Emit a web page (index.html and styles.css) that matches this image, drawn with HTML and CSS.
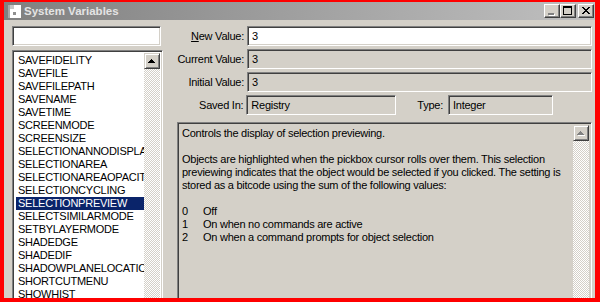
FILE: index.html
```html
<!DOCTYPE html>
<html lang="en">
<head>
  <meta charset="UTF-8" />
  <title>System Variables</title>
  <link rel="stylesheet" href="styles.css">
</head>
<body>
  <div class="frame">
    <div class="titlebar">
      <svg class="app-icon" width="13" height="13" viewBox="0 0 13 13" shape-rendering="crispEdges">
        <rect x="0" y="0" width="13" height="13" fill="#fff"/>
        <rect x="0" y="0" width="2" height="13" fill="#a8a8a8"/>
        <rect x="2" y="0" width="4" height="4" fill="#c8c8c8"/>
        <rect x="5" y="7" width="3" height="3" fill="#909090"/>
      </svg>
      <span class="title">System Variables</span>
      <div class="caption-buttons">
        <span class="cap-btn">
          <svg width="14" height="12" viewBox="0 0 14 12" shape-rendering="crispEdges">
            <rect x="4" y="9" width="6" height="2" fill="#fff"/>
            <rect x="3" y="8" width="6" height="2" fill="#808080"/>
          </svg>
        </span>
        <span class="cap-btn">
          <svg width="14" height="12" viewBox="0 0 14 12" shape-rendering="crispEdges">
            <path d="M2 1h9v9H2z M3 3v6h7V3z" fill="#000" fill-rule="evenodd"/>
          </svg>
        </span>
        <span class="cap-btn close">
          <svg width="14" height="12" viewBox="0 0 14 12" shape-rendering="crispEdges">
            <path d="M3 2h2v1h1v1h2V3h1V2h2v1h-1v1H9v1H8v1h1v1h1v1h1v1H9V8H8V7H6v1H5v1H3V8h1V7h1V6h1V5H5V4H4V3H3z" fill="#000"/>
          </svg>
        </span>
      </div>
    </div>

    <div class="window">
      <div class="left">
        <div class="field search"></div>
        <div class="field listbox">
          <ul class="items">
            <li>SAVEFIDELITY</li>
            <li>SAVEFILE</li>
            <li>SAVEFILEPATH</li>
            <li>SAVENAME</li>
            <li>SAVETIME</li>
            <li>SCREENMODE</li>
            <li>SCREENSIZE</li>
            <li>SELECTIONANNODISPLA</li>
            <li>SELECTIONAREA</li>
            <li>SELECTIONAREAOPACIT</li>
            <li>SELECTIONCYCLING</li>
            <li class="selected">SELECTIONPREVIEW</li>
            <li>SELECTSIMILARMODE</li>
            <li>SETBYLAYERMODE</li>
            <li>SHADEDGE</li>
            <li>SHADEDIF</li>
            <li>SHADOWPLANELOCATIC</li>
            <li>SHORTCUTMENU</li>
            <li>SHOWHIST</li>
          </ul>
          <div class="scrollbar">
            <span class="arrow-btn">
              <svg width="12" height="12" viewBox="0 0 12 12" shape-rendering="crispEdges">
                <path d="M5 4h1v1h1v1h1v1h1v1H2V7h1V6h1V5h1z" fill="#000"/>
              </svg>
            </span>
          </div>
        </div>
      </div>

      <div class="right">
        <div class="row">
          <span class="lbl"><u>N</u>ew Value:</span>
          <div class="field value editable">3</div>
        </div>
        <div class="row">
          <span class="lbl">Current Value:</span>
          <div class="field value">3</div>
        </div>
        <div class="row">
          <span class="lbl">Initial Value:</span>
          <div class="field value">3</div>
        </div>
        <div class="row">
          <span class="lbl">Saved In:</span>
          <div class="field value saved">Registry</div>
          <span class="type-lbl">Type:</span>
          <div class="field value type">Integer</div>
        </div>

        <div class="field desc">
          <div class="desc-text">
            <p>Controls the display of selection previewing.</p>
            <p>Objects are highlighted when the pickbox cursor rolls over them. This selection<br>
              previewing indicates that the object would be selected if you clicked. The setting is<br>
              stored as a bitcode using the sum of the following values:</p>
            <div class="opts">
              <div class="opt"><span class="num">0</span><span>Off</span></div>
              <div class="opt"><span class="num">1</span><span>On when no commands are active</span></div>
              <div class="opt"><span class="num">2</span><span>On when a command prompts for object selection</span></div>
            </div>
          </div>
          <div class="scrollbar">
            <span class="arrow-btn">
              <svg width="12" height="12" viewBox="0 0 12 12" shape-rendering="crispEdges">
                <path d="M6 5h1v1h1v1h1v1h1v1H3V8h1V7h1V6h1z" fill="#fff"/>
                <path d="M5 4h1v1h1v1h1v1h1v1H2V7h1V6h1V5h1z" fill="#808080"/>
              </svg>
            </span>
          </div>
        </div>
      </div>
    </div>
  </div>
</body>
</html>
```

FILE: styles.css
```css
html, body {
  margin: 0;
  padding: 0;
  height: 100%;
}
body {
  font-family: "Liberation Sans", Arial, sans-serif;
  font-size: 11px;
  letter-spacing: -0.25px;
  color: #000;
  background: #d4d0c8;
}
.frame {
  box-sizing: border-box;
  height: 302px;
  width: 600px;
  border-style: solid;
  border-color: #f00;
  border-width: 2px 5px 4px 4px;
  background: #d4d0c8;
  display: flex;
  flex-direction: column;
  overflow: hidden;
}
.titlebar {
  height: 18px;
  flex: none;
  display: flex;
  align-items: center;
  padding: 0 1px 0 4px;
  background: linear-gradient(to right, #808080, #c0c0c0);
}
.app-icon {
  margin-right: 3px;
}
.title {
  font-weight: bold;
  font-size: 11.5px;
  letter-spacing: 0;
  color: #e4e4e4;
  flex: 1;
}
.caption-buttons {
  display: flex;
  align-items: center;
}
.cap-btn {
  box-sizing: border-box;
  width: 16px;
  height: 14px;
  display: flex;
  align-items: center;
  justify-content: center;
  background: #d4d0c8;
  border: 1px solid;
  border-color: #fff #404040 #404040 #fff;
  box-shadow: inset -1px -1px #808080;
}
.cap-btn.close {
  margin-left: 2px;
}

/* sunken 3d border */
.field {
  box-sizing: border-box;
  border: 1px solid;
  border-color: #808080 #fff #fff #808080;
  box-shadow: inset 1px 1px #404040, inset -1px -1px #d4d0c8;
}

.window {
  flex: 1;
  display: flex;
  gap: 13px;
  padding: 6px 3px 0 8px;
  min-height: 0;
}
.left {
  width: 151px;
  flex: none;
  display: flex;
  flex-direction: column;
  gap: 4px;
}
.search {
  flex: none;
  width: 149px;
  height: 20px;
  background: #fff;
}
.listbox {
  flex: none;
  height: 260px;
  background: #fff;
  display: flex;
  padding: 2px;
  overflow: hidden;
}
.items {
  list-style: none;
  margin: 0;
  padding: 1px 0 0 1px;
  flex: 1;
  min-width: 0;
  overflow: hidden;
}
.items li {
  height: 13px;
  line-height: 13px;
  padding-left: 2px;
  white-space: nowrap;
  overflow: hidden;
}
.items li.selected {
  background: #0a246a;
  color: #fff;
}
.scrollbar {
  width: 16px;
  flex: none;
  background: repeating-conic-gradient(#fff 0 25%, #d4d0c8 0 50%) 0 0 / 2px 2px;
}
.arrow-btn {
  box-sizing: border-box;
  display: flex;
  align-items: center;
  justify-content: center;
  width: 16px;
  height: 16px;
  background: #d4d0c8;
  border: 1px solid;
  border-color: #d4d0c8 #404040 #404040 #d4d0c8;
  box-shadow: inset 1px 1px #fff, inset -1px -1px #808080;
}

.right {
  flex: 1;
  display: flex;
  flex-direction: column;
  gap: 3px;
  min-width: 0;
}
.row {
  display: flex;
  align-items: center;
  gap: 3px;
}
.lbl {
  width: 68px;
  text-align: right;
  white-space: nowrap;
}
.value {
  flex: 1;
  height: 20px;
  line-height: 18px;
  padding-left: 4px;
  white-space: nowrap;
}
.value.editable {
  background: #fff;
}
.value.saved {
  flex: none;
  width: 150px;
}
.type-lbl {
  margin-left: 18px;
  margin-right: 2px;
}
.value.type {
  flex: none;
  width: 105px;
  margin-right: 39px;
}

.desc {
  margin-top: 4px;
  margin-left: 1px;
  height: 200px;
  flex: none;
  display: flex;
  padding: 2px;
}
.desc-text {
  flex: 1;
  padding: 2px 0 0 2px;
  line-height: 13px;
  white-space: nowrap;
  overflow: hidden;
}
.desc-text p {
  margin: 0 0 13px 0;
}
.opt {
  display: flex;
}
.num {
  width: 21px;
}
```
